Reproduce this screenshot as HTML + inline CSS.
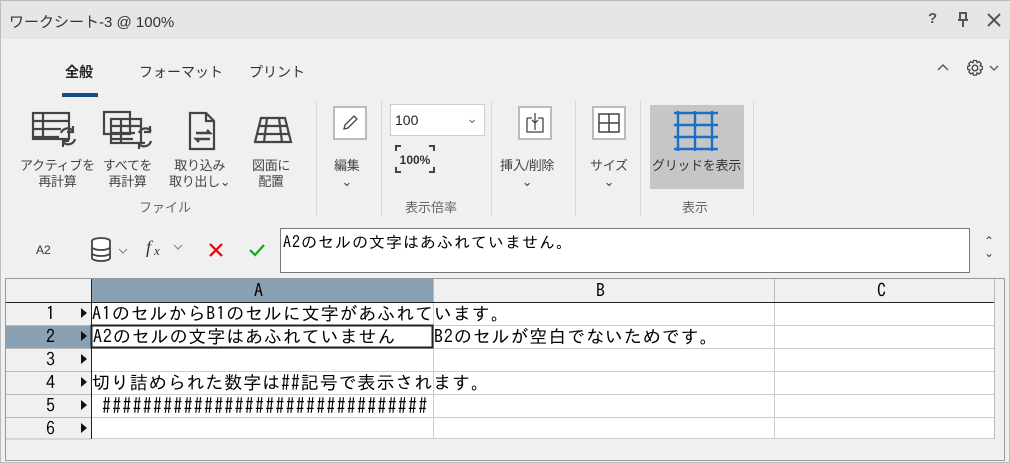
<!DOCTYPE html>
<html><head><meta charset="utf-8"><style>
*{box-sizing:border-box;margin:0;padding:0}
body{width:1010px;height:463px;overflow:hidden;background:#f0f0f0;font-family:"Liberation Sans","Noto Sans CJK JP",sans-serif;color:#333;position:relative;border:1px solid #bbb}
.abs{position:absolute}
.t{font-size:13px;color:#444;text-align:center;line-height:16px;white-space:nowrap;letter-spacing:-0.3px}
.sep{position:absolute;top:100px;width:1px;height:116px;background:#d8d8d8}
.grp{position:absolute;top:196px;font-size:13px;color:#666}
.cell{position:absolute;font-family:"IPAGothic","Noto Sans CJK JP",sans-serif;font-size:18px;color:#000;white-space:nowrap;line-height:22px;letter-spacing:0.9px}
</style></head><body>
<div class="abs" style="left:0;top:0;width:1010px;height:38px;background:#e6e6e6"></div>
<div class="abs" style="left:8px;top:10px;font-size:15px;color:#333">ワークシート-3 @ 100%</div>
<div class="abs" style="left:927px;top:9px;font-size:15px;color:#555;font-weight:bold">?</div>
<svg class="abs" style="left:955px;top:11px" width="14" height="16"><path d="M3 1h8M4 1v7h6V1M2 8h10M7 8v7" stroke="#555" stroke-width="2" fill="none"/></svg>
<svg class="abs" style="left:986px;top:12px" width="14" height="14"><path d="M1 1l12 12M13 1L1 13" stroke="#555" stroke-width="2"/></svg>
<div class="abs" style="left:64px;top:61px;font-size:14px;color:#222;font-weight:bold">全般</div>
<div class="abs" style="left:61px;top:92px;width:36px;height:4px;background:#0e4d8a"></div>
<div class="abs" style="left:138px;top:61px;font-size:14px;color:#333">フォーマット</div>
<div class="abs" style="left:248px;top:61px;font-size:14px;color:#333">プリント</div>
<svg class="abs" style="left:936px;top:62px" width="12" height="8"><path d="M1 7l5-5 5 5" stroke="#555" fill="none" stroke-width="1.4"/></svg>
<svg class="abs" style="left:964px;top:57px" width="38" height="20"><circle cx="10" cy="10" r="2.8" stroke="#444" fill="none" stroke-width="1.4"/><path d="M8.5 2.5h3l.6 2.2 2-1.1 2.1 2.1-1.1 2 2.2.6v3l-2.2.6 1.1 2-2.1 2.1-2-1.1-.6 2.2h-3l-.6-2.2-2 1.1-2.1-2.1 1.1-2-2.2-.6v-3l2.2-.6-1.1-2 2.1-2.1 2 1.1z" stroke="#444" fill="none" stroke-width="1.3"/><path d="M25 8l4 4 4-4" stroke="#555" fill="none" stroke-width="1.3"/></svg>
<svg class="abs" style="left:30px;top:110px" width="50" height="40"><g stroke="#444" stroke-width="2.2" fill="none"><rect x="2" y="2" width="36" height="26"/><path d="M2 10h36M2 18h28M2 26h26M12 2v26"/><path d="M30 22a7 7 0 0 1 12-2M44 28a7 7 0 0 1-12 3"/><path d="M42 15v6h-6M32 36v-6h6"/></g></svg>
<svg class="abs" style="left:100px;top:108px" width="55" height="44"><g stroke="#444" stroke-width="2.2" fill="none"><rect x="3" y="3" width="26" height="22"/><rect x="10" y="10" width="30" height="24"/><path d="M10 17h30M10 24h24M10 30h22M20 10v24"/><path d="M38 24a7 7 0 0 1 12-2M50 32a7 7 0 0 1-12 3"/><path d="M49 17v6h-6M38 40v-6h6"/></g></svg>
<svg class="abs" style="left:187px;top:110px" width="30" height="40"><g stroke="#444" stroke-width="2.2" fill="none"><path d="M2 2h16l8 8v28H2z M18 2v8h8"/></g><path d="M8 22h14l-3-3M22 28H8l3 3" stroke="#444" stroke-width="2.4" fill="none"/></svg>
<svg class="abs" style="left:252px;top:115px" width="40" height="30"><g stroke="#444" stroke-width="2.2" fill="none"><path d="M8 2h24l6 24H2z M5 10h30M3 18h34M14 2l-3 24M26 2l3 24"/></g></svg>
<div class="t abs" style="left:19px;top:157px">アクティブを<br>再計算</div>
<div class="t abs" style="left:102px;top:157px">すべてを<br>再計算</div>
<div class="t abs" style="left:168px;top:157px">取り込み<br>取り出し⌄</div>
<div class="t abs" style="left:251px;top:157px">図面に<br>配置</div>
<div class="grp" style="left:138px">ファイル</div>
<div class="sep" style="left:315px"></div>
<div class="abs" style="left:332px;top:105px;width:34px;height:34px;border:2px solid #bbb;background:#fff"></div>
<svg class="abs" style="left:340px;top:112px" width="18" height="20"><path d="M3 16l1-4 9-9 3 3-9 9z" stroke="#444" fill="none" stroke-width="1.3"/></svg>
<div class="t abs" style="left:333px;top:157px">編集<br>⌄</div>
<div class="sep" style="left:380px"></div>
<div class="abs" style="left:389px;top:103px;width:95px;height:32px;border:1px solid #ccc;background:#fff;font-size:14px;color:#222;padding:7px 4px">100<span style="position:absolute;right:6px;top:5px;color:#777">⌄</span></div>
<svg class="abs" style="left:394px;top:144px" width="40" height="28"><path d="M1 6V1h5M34 1h5v5M1 22v5h5M34 27h5v-5" stroke="#444" stroke-width="2" fill="none"/><text x="20" y="19" font-size="12" font-weight="bold" text-anchor="middle" fill="#333" font-family="Liberation Sans">100%</text></svg>
<div class="grp" style="left:404px">表示倍率</div>
<div class="sep" style="left:490px"></div>
<div class="abs" style="left:517px;top:105px;width:34px;height:34px;border:2px solid #bbb;background:#fff"></div>
<svg class="abs" style="left:524px;top:111px" width="20" height="22"><path d="M2 6h5M13 6h5M2 6v14h16V6M10 4v14M7 8l3 3 3-3M10 1v9" stroke="#444" fill="none" stroke-width="1.3"/></svg>
<div class="t abs" style="left:499px;top:157px">挿入/削除<br>⌄</div>
<div class="sep" style="left:574px"></div>
<div class="abs" style="left:591px;top:105px;width:34px;height:34px;border:2px solid #bbb;background:#fff"></div>
<svg class="abs" style="left:596px;top:110px" width="24" height="24"><path d="M2 3h20v18H2zM12 3v18M2 12h20" stroke="#444" fill="none" stroke-width="1.5"/></svg>
<div class="t abs" style="left:589px;top:157px">サイズ<br>⌄</div>
<div class="sep" style="left:639px"></div>
<div class="abs" style="left:649px;top:104px;width:94px;height:84px;background:#c6c6c6"></div>
<svg class="abs" style="left:672px;top:110px" width="46" height="40"><g stroke="#1a6fc9" stroke-width="2.4" fill="none"><path d="M1 2h44M1 14h44M1 26h44M1 38h44M5 0v40M22 0v40M39 0v40"/></g></svg>
<div class="t abs" style="left:651px;top:157px;color:#333">グリッドを表示</div>
<div class="grp" style="left:681px">表示</div>
<div class="sep" style="left:752px"></div>
<div class="abs" style="left:35px;top:242px;font-size:12px;color:#333">A2</div>
<svg class="abs" style="left:88px;top:235px" width="42" height="28"><g stroke="#444" stroke-width="1.8" fill="#fff"><ellipse cx="12" cy="5" rx="9" ry="3"/><path d="M3 5v17a9 3 0 0 0 18 0V5M3 11a9 3 0 0 0 18 0M3 17a9 3 0 0 0 18 0"/></g><path d="M30 13l4 4 4-4" stroke="#888" fill="none" stroke-width="1.2"/></svg>
<svg class="abs" style="left:144px;top:237px" width="42" height="20"><text x="1" y="15" font-size="18" font-style="italic" font-family="Liberation Serif" fill="#333">f</text><text x="9" y="17" font-size="13" font-style="italic" font-family="Liberation Serif" fill="#333">x</text><path d="M29 7l4 4 4-4" stroke="#888" fill="none" stroke-width="1.2"/></svg>
<svg class="abs" style="left:207px;top:241px" width="16" height="16"><path d="M2 2l12 12M14 2L2 14" stroke="#e00" stroke-width="2.2"/></svg>
<svg class="abs" style="left:248px;top:242px" width="16" height="14"><path d="M1 7l5 5L15 2" stroke="#1a1" stroke-width="2.2" fill="none"/></svg>
<div class="abs" style="left:279px;top:227px;width:690px;height:45px;background:#fff;border:1px solid #777;font-size:16px;color:#000;padding:5px 0 0 2px;font-family:'IPAGothic','Noto Sans CJK JP',sans-serif;white-space:nowrap;letter-spacing:1px">A2のセルの文字はあふれていません。</div>
<div class="abs" style="left:983px;top:234px;font-size:12px;color:#444;line-height:12px">⌃<br>⌄</div>
<div class="abs" style="left:4px;top:277px;width:1000px;height:183px;border:1px solid #999;background:#f0f0f0;overflow:hidden">
<svg width="1000" height="183" style="position:absolute;left:0;top:0">
<rect x="0" y="0" width="85" height="160" fill="#f0f0f0"/>
<rect x="85" y="0" width="342" height="23" fill="#8aa1b4"/>
<rect x="427" y="0" width="561" height="23" fill="#f0f0f0"/>
<rect x="0" y="46" width="85" height="23" fill="#8aa1b4"/>
<rect x="85" y="23" width="903" height="137" fill="#fff"/>
<g stroke="#ccc" stroke-width="1"><path d="M427.5 23v137M768.5 0v160M85 46.5h903M85 69.5h903M85 92.5h903M85 115.5h903M85 138.5h903M85 159.5h903"/></g>
<g stroke="#bbb" stroke-width="1"><path d="M0 23.5h988M0 46.5h85M0 69.5h85M0 92.5h85M0 115.5h85M0 138.5h85M0 160h85M427.5 0v23M768.5 0v23M988.5 0v160"/></g>
<path d="M85.5 0v160M0 23.5h988" stroke="#222"/>
<g fill="#111"><path d="M75 29l6 5-6 5zM75 52l6 5-6 5zM75 75l6 5-6 5zM75 98l6 5-6 5zM75 121l6 5-6 5zM75 144l6 5-6 5z"/></g>
<rect x="85.5" y="46.5" width="341" height="22" fill="none" stroke="#222" stroke-width="2"/>
</svg>
<div class="cell" style="left:248px;top:1px">A</div>
<div class="cell" style="left:590px;top:1px">B</div>
<div class="cell" style="left:871px;top:1px">C</div>
<div class="cell" style="left:40px;top:24px">1</div>
<div class="cell" style="left:40px;top:47px">2</div>
<div class="cell" style="left:40px;top:70px">3</div>
<div class="cell" style="left:40px;top:93px">4</div>
<div class="cell" style="left:40px;top:116px">5</div>
<div class="cell" style="left:40px;top:139px">6</div>
<div class="cell" style="left:86px;top:24px">A1のセルからB1のセルに文字があふれています。</div>
<div class="cell" style="left:87px;top:47px">A2のセルの文字はあふれていません</div>
<div class="cell" style="left:428px;top:47px">B2のセルが空白でないためです。</div>
<div class="cell" style="left:86px;top:93px">切り詰められた数字は##記号で表示されます。</div>
<div class="cell" style="left:96px;top:116px;letter-spacing:1.2px">################################</div>
</div>
</body></html>
